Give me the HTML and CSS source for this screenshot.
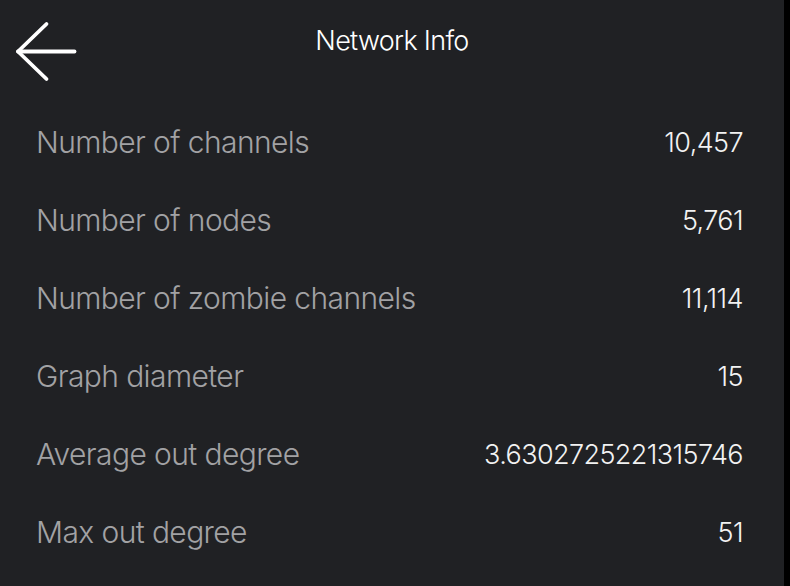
FILE: index.html
```html
<!DOCTYPE html>
<html lang="en">
<head>
<meta charset="utf-8">
<title>Network Info</title>
<link rel="stylesheet" href="styles.css">
</head>
<body>
<div class="app">
  <header class="header">
    <button class="back" aria-label="Back">
      <svg width="90" height="100" viewBox="0 0 90 100" fill="none" stroke="#ffffff" stroke-width="3.8" stroke-linecap="round" stroke-linejoin="round">
        <path d="M18 51.5 H74.5"/>
        <path d="M46.5 24 L18 51.5 L46.5 79"/>
      </svg>
    </button>
    <h1 class="title">Network Info</h1>
  </header>
  <ul class="list">
    <li class="row"><span class="label">Number of channels</span><span class="value">10,457</span></li>
    <li class="row"><span class="label">Number of nodes</span><span class="value">5,761</span></li>
    <li class="row"><span class="label">Number of zombie channels</span><span class="value">11,114</span></li>
    <li class="row"><span class="label">Graph diameter</span><span class="value">15</span></li>
    <li class="row"><span class="label">Average out degree</span><span class="value">3.6302725221315746</span></li>
    <li class="row"><span class="label">Max out degree</span><span class="value">51</span></li>
  </ul>
</div>
</body>
</html>
```

FILE: styles.css
```css
html, body {
  margin: 0;
  padding: 0;
  background: #000000;
  height: 100%;
}
.app {
  width: 784px;
  height: 586px;
  background: #202124;
  font-family: "Inter", "Liberation Sans", sans-serif;
  font-weight: 300;
  overflow: hidden;
}
.header {
  position: relative;
  height: 80px;
  display: flex;
  align-items: center;
  justify-content: center;
}
.back {
  position: absolute;
  left: 0;
  top: 0;
  width: 90px;
  height: 100px;
  padding: 0;
  border: 0;
  background: none;
}
.back svg {
  display: block;
  width: 90px;
  height: 100px;
}
.title {
  margin: 0;
  font-size: 27px;
  font-weight: 300;
  color: #ffffff;
  letter-spacing: -0.7px;
}
.list {
  list-style: none;
  margin: 0;
  padding: 23px 41px 0 36px;
}
.row {
  height: 78px;
  display: flex;
  align-items: center;
  justify-content: space-between;
}
.label {
  font-size: 30px;
  color: #a2a2a4;
  letter-spacing: -0.6px;
}
.value {
  font-size: 27px;
  color: #f2f2f2;
  letter-spacing: -0.6px;
}
```
